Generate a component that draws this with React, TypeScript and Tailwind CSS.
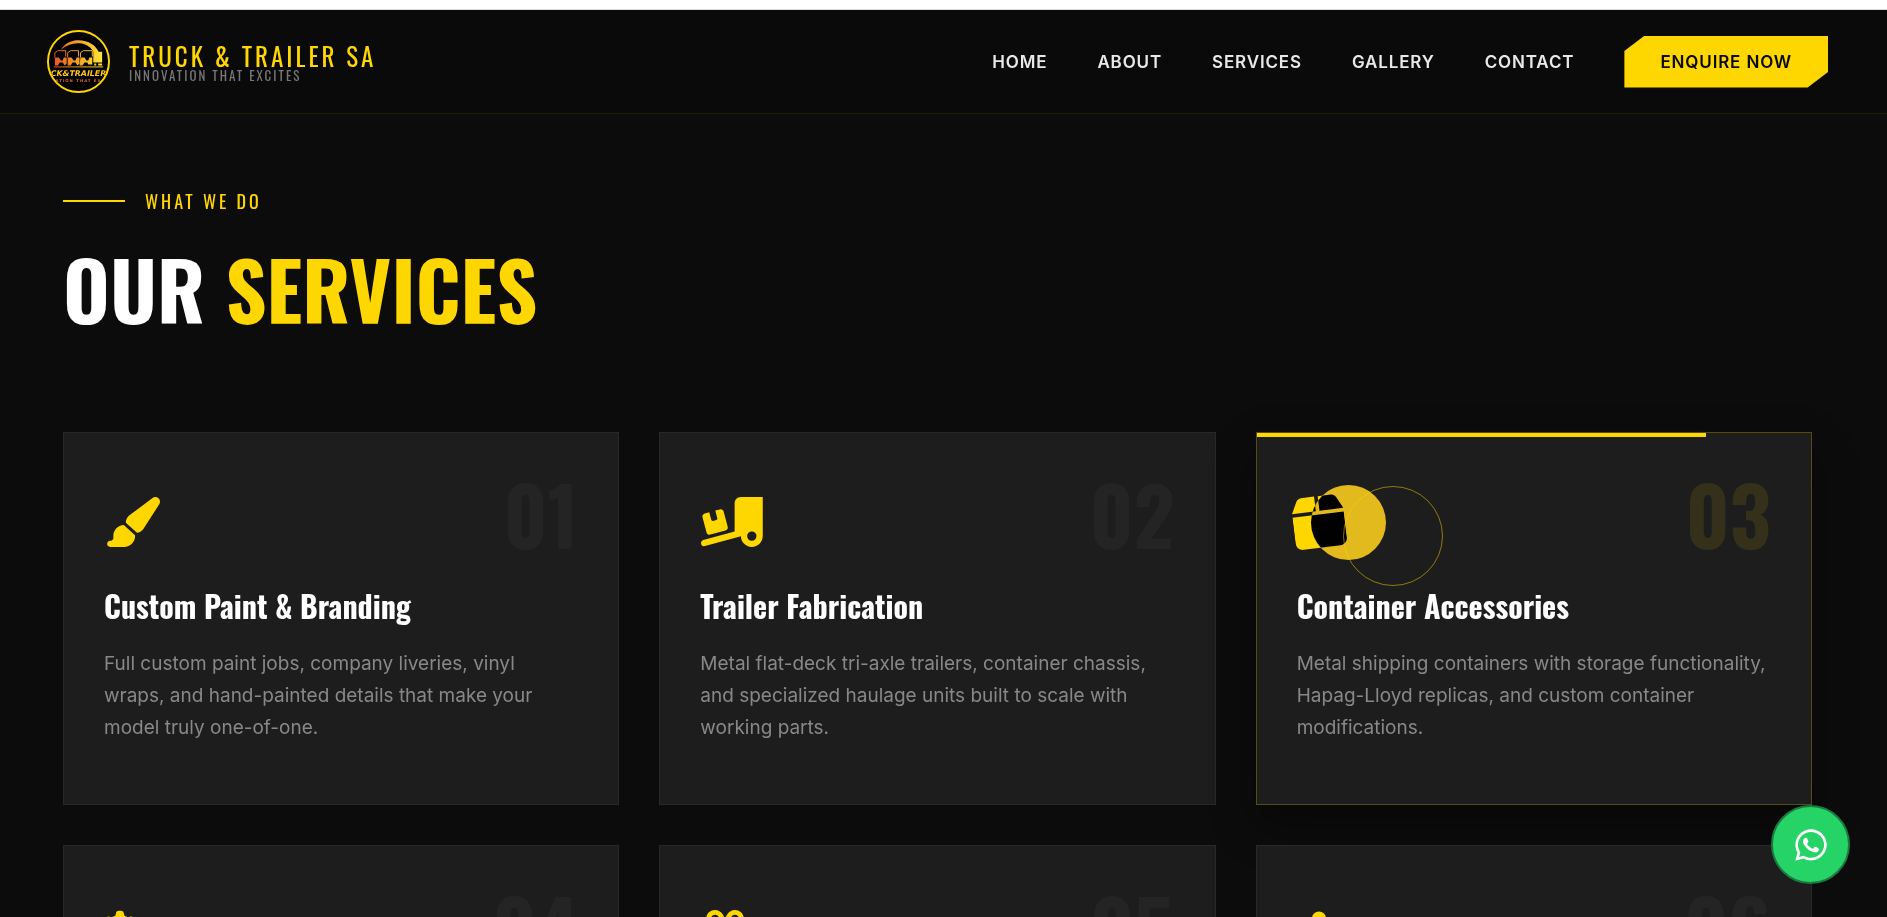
import { FaBaby, FaBox, FaGears, FaGift, FaPaintbrush, FaTruckRampBox, FaWhatsapp } from "react-icons/fa6";

const display = "font-['Oswald',sans-serif]";

const NAV_LINKS = ["Home", "About", "Services", "Gallery", "Contact"];

const SERVICES = [
  {
    number: "01",
    icon: FaPaintbrush,
    iconWidth: "w-14",
    title: "Custom Paint & Branding",
    text: "Full custom paint jobs, company liveries, vinyl wraps, and hand-painted details that make your model truly one-of-one.",
  },
  {
    number: "02",
    icon: FaTruckRampBox,
    iconWidth: "w-[63px]",
    title: "Trailer Fabrication",
    text: "Metal flat-deck tri-axle trailers, container chassis, and specialized haulage units built to scale with working parts.",
  },
  {
    number: "03",
    icon: FaBox,
    iconWidth: "w-11",
    title: "Container Accessories",
    text: "Metal shipping containers with storage functionality, Hapag-Lloyd replicas, and custom container modifications.",
    active: true,
  },
  { number: "04", icon: FaGears, iconWidth: "w-[63px]" },
  { number: "05", icon: FaGift, iconWidth: "w-[50px]" },
  { number: "06", icon: FaBaby, iconWidth: "w-11" },
];

type Service = (typeof SERVICES)[number];

const Logo = () => (
  <svg viewBox="0 0 64 64" className="h-[63px] w-[63px] shrink-0" aria-hidden="true">
    <defs>
      <linearGradient id="sunset" gradientUnits="userSpaceOnUse" x1="8" y1="0" x2="57" y2="0">
        <stop offset="0" stopColor="#e8582c" />
        <stop offset="0.5" stopColor="#f5a623" />
        <stop offset="1" stopColor="#ffe83a" />
      </linearGradient>
      <clipPath id="badge">
        <circle cx="32" cy="32" r="30" />
      </clipPath>
    </defs>
    <circle cx="32" cy="32" r="31" fill="#000" />
    <g clipPath="url(#badge)">
      <path d="M14 20C19 13 25 10.500 32 10.500c10 0 18 5 21 13h-5c-3-6-8-9.500-15-10-7-.5-13 2-19 6.500z" fill="url(#sunset)" />
      {/* Three cabs with the trailer at the end */}
      <g fill="none" stroke="url(#sunset)" strokeWidth="1">
        <path d="M8 28v-5l3-2h8v6M21 28v-5l3-2h8v6M34 28v-5l3-2h9v6M7 37.500h50" />
      </g>
      <path
        d="M8 28h4l2 3h2l1-3h3v6l-2 2-2-3h-3l-2 3H8zM21 28h4l2 3h2l1-3h3v6l-2 2-2-3h-3l-2 3h-3zM34 28h4l2 3h2l1-3h3v7h-4l-1-2h-3l-2 3h-3z"
        fill="url(#sunset)"
      />
      <path d="M47 22h9v11h-9zM48 34h2v2h-2zM52 34h4v2h-4z" fill="url(#sunset)" />
      <text x="32" y="47" textAnchor="middle" fontSize="8" fontStyle="italic" fill="#ffc61a" className="font-['DejaVu_Sans',sans-serif] font-bold">
        CK&amp;TRAILER
      </text>
      <text x="32" y="53" textAnchor="middle" fontSize="4" fill="#e8622c" className="font-['DejaVu_Sans',sans-serif] font-bold tracking-[1px]">
        VATION THAT EXC
      </text>
    </g>
    <circle cx="32" cy="32" r="31" fill="none" stroke="#ffd700" strokeWidth="2" />
  </svg>
);

const Navbar = () => (
  <header className="flex h-[104px] items-center justify-between border-b border-[#ffd700]/10 bg-[#0a0a0a] pr-[59px] pl-[47px]">
    <a href="#home" className="flex items-center gap-[19px]">
      <Logo />
      <span className={`flex flex-col ${display}`}>
        <span className="text-[25px] leading-[26px] tracking-[3px] text-[#ffd700]">TRUCK &amp; TRAILER SA</span>
        <span className="text-[13px] leading-3 tracking-[2px] text-[#777]">INNOVATION THAT EXCITES</span>
      </span>
    </a>
    <nav className="flex items-center gap-[50px] text-[17px] leading-6 font-semibold tracking-wider uppercase">
      {NAV_LINKS.map((link) => (
        <a key={link} href={`#${link.toLowerCase()}`} className="text-[#e8e8e8]">
          {link}
        </a>
      ))}
      <a
        href="#enquire"
        className="bg-[#ffd700] px-9 py-[14px] text-[#0a0a0a] [clip-path:polygon(10%_0,100%_0,100%_70%,90%_100%,0_100%,0_30%)]"
      >
        Enquire Now
      </a>
    </nav>
  </header>
);

const ServiceCard = ({ service }: { service: Service }) => {
  const Icon = service.icon;
  return (
    <article
      className={`relative border bg-[#1d1d1d] px-10 pt-16 ${
        service.active ? "border-[#ffd700]/25 shadow-[0_20px_40px_rgba(0,0,0,0.4)]" : "border-white/5"
      }`}
    >
      {service.active && <div className="absolute top-0 left-0 h-1 w-[81%] bg-[#ffd700]" />}
      <span
        className={`absolute top-[30px] right-10 text-[80px] leading-[100px] font-bold ${display} ${
          service.active ? "text-[#ffd700]/10" : "text-white/[0.03]"
        }`}
      >
        {service.number}
      </span>
      <Icon
        className={`h-[50px] text-[#ffd700] ${service.iconWidth} ${service.active ? "scale-[1.18] -rotate-7" : ""}`}
      />
      {service.title && (
        <>
          <h3 className={`mt-9 text-[30px] leading-[45px] font-bold text-white ${display}`}>{service.title}</h3>
          <p className="mt-5 text-[19px] leading-8 text-[#888]">{service.text}</p>
        </>
      )}
    </article>
  );
};

const Cursor = () => (
  <div className="pointer-events-none">
    <div className="absolute top-[485px] left-[1311px] h-[75px] w-[75px] rounded-full bg-[#ffd700] mix-blend-difference" />
    <div className="absolute top-[486px] left-[1343px] h-[100px] w-[100px] rounded-full border border-[#ffd700]/50" />
  </div>
);

export default function App() {
  return (
    <div className="relative h-screen overflow-hidden bg-[#0c0c0c] font-['Inter',sans-serif]">
      <div className="h-[10px] border-b border-[#dadce0] bg-white" />
      <Navbar />
      <main id="services" className="pt-[73px] pr-[75px] pl-[63px]">
        <div className="flex items-center gap-5">
          <span className="h-[2px] w-[62px] bg-[#ffd700]" />
          <span className={`text-[18px] leading-7 tracking-[3px] text-[#ffd700] ${display}`}>WHAT WE DO</span>
        </div>
        <h2 className={`mt-5 text-[80px] leading-[106px] font-bold text-white ${display}`}>
          OUR <span className="text-[#ffd700]">SERVICES</span>
        </h2>
        <div className="mt-[91px] grid auto-rows-[373px] grid-cols-3 gap-10">
          {SERVICES.map((service) => (
            <ServiceCard key={service.number} service={service} />
          ))}
        </div>
      </main>
      <Cursor />
      <a
        href="#whatsapp"
        aria-label="WhatsApp"
        className="absolute right-[37px] bottom-[33px] flex h-[79px] w-[79px] items-center justify-center rounded-full border-2 border-[#1b7a3f] bg-[#25d366] text-white"
      >
        <FaWhatsapp className="h-9 w-9" />
      </a>
    </div>
  );
}
